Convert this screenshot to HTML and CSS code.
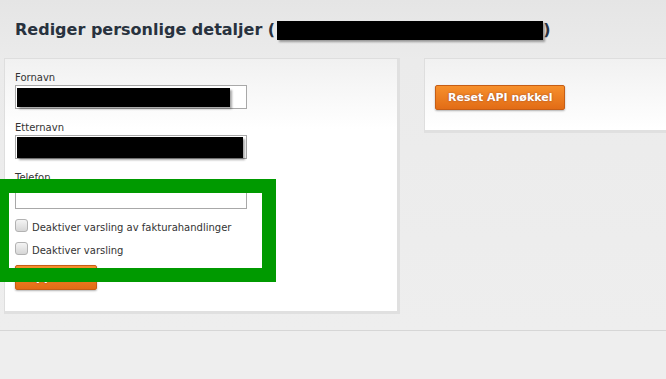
FILE: index.html
```html
<!DOCTYPE html>
<html lang="no">
<head>
<meta charset="utf-8">
<title>Rediger personlige detaljer</title>
<link rel="stylesheet" href="styles.css">
</head>
<body>
<div class="page">
  <h1 class="title">Rediger personlige detaljer (<span class="redact redact-title"></span>)</h1>
  <div class="cards">
    <section class="card card-form">
      <div class="field">
        <label class="label">Fornavn</label>
        <div class="input"><span class="redact redact-first"></span></div>
      </div>
      <div class="field">
        <label class="label">Etternavn</label>
        <div class="input"><span class="redact redact-last"></span></div>
      </div>
      <div class="field field-last">
        <label class="label">Telefon</label>
        <div class="input"></div>
      </div>
      <div class="check-row">
        <span class="checkbox"></span>
        <span class="check-label">Deaktiver varsling av fakturahandlinger</span>
      </div>
      <div class="check-row">
        <span class="checkbox"></span>
        <span class="check-label">Deaktiver varsling</span>
      </div>
      <button class="btn btn-save">Oppdater</button>
    </section>
    <section class="card card-api">
      <button class="btn">Reset API nøkkel</button>
    </section>
  </div>
  <div class="divider"></div>
  <div class="annotation"></div>
</div>
</body>
</html>
```
FILE: styles.css
```css
html, body {
  margin: 0;
  padding: 0;
}
body {
  background: #eeeeee;
  font-family: "DejaVu Sans", Verdana, sans-serif;
  color: #333;
  overflow: hidden;
}
.page {
  position: relative;
  height: 379px;
  overflow: hidden;
  background: linear-gradient(#e5e5e5 0px, #ebebeb 60px, #eeeeee 330px);
}
.title {
  margin: 0;
  padding: 19px 15px 0;
  font-size: 16px;
  line-height: 20px;
  font-weight: bold;
  color: #28323e;
  display: flex;
  align-items: center;
  white-space: nowrap;
}
.redact {
  display: block;
  background: #000;
  box-shadow: 2px 2px 2px rgba(0,0,0,0.35);
}
.redact-title {
  width: 266px;
  height: 19px;
  margin: 2px 0 0 2px;
}
.cards {
  display: flex;
  align-items: flex-start;
  gap: 24px;
  padding-left: 4px;
  margin-top: 18px;
}
.card {
  flex-shrink: 0;
  background: linear-gradient(#f1f1f1 0px, #ffffff 70px);
  border: 1px solid #dedede;
  border-right: 3px solid #e0e0e0;
  border-bottom: 3px solid #e0e0e0;
  box-sizing: border-box;
}
.card-form {
  width: 396px;
  height: 256px;
  padding: 13px 10px 0;
}
.card-api {
  width: 280px;
  height: 75px;
  padding: 26px 10px 0;
}
.field {
  margin-bottom: 13px;
}
.field-last {
  margin-bottom: 10px;
}
.label {
  display: block;
  font-size: 10px;
  line-height: 12px;
  height: 13px;
  color: #333;
}
.input {
  width: 232px;
  height: 24px;
  box-sizing: border-box;
  border: 1px solid #a8a8a8;
  background: #fff;
  padding: 2px 1px;
  display: flex;
}
.redact-first {
  width: 213px;
  height: 19px;
}
.redact-last {
  width: 226px;
  height: 21px;
  margin-top: -1px;
}
.check-row {
  display: flex;
  align-items: flex-start;
  height: 23px;
}
.checkbox {
  width: 11px;
  height: 11px;
  border: 1px solid #b2b2b2;
  border-radius: 3px;
  background: linear-gradient(#f4f4f4, #d6d6d6);
}
.check-label {
  font-size: 10px;
  line-height: 12px;
  margin: 3px 0 0 4px;
  color: #333;
}
.btn {
  display: block;
  height: 25px;
  box-sizing: border-box;
  padding: 0 12px;
  border: 1px solid #c65e16;
  border-radius: 2px;
  background: linear-gradient(#f7902c, #e26c16);
  color: #fff;
  font-family: "DejaVu Sans", Verdana, sans-serif;
  font-weight: bold;
  font-size: 11px;
  text-shadow: 0 0 2px rgba(90,40,60,0.6);
  box-shadow: 0 1px 2px rgba(0,0,0,0.3);
  cursor: pointer;
}
.btn-save {
  width: 82px;
  padding: 0;
}
.divider {
  margin-top: 16px;
  height: 1px;
  background: #d6d6d6;
}
.annotation {
  position: absolute;
  left: -5px;
  top: 179px;
  width: 281px;
  height: 103px;
  box-sizing: border-box;
  border: 14px solid #009a00;
}
```
